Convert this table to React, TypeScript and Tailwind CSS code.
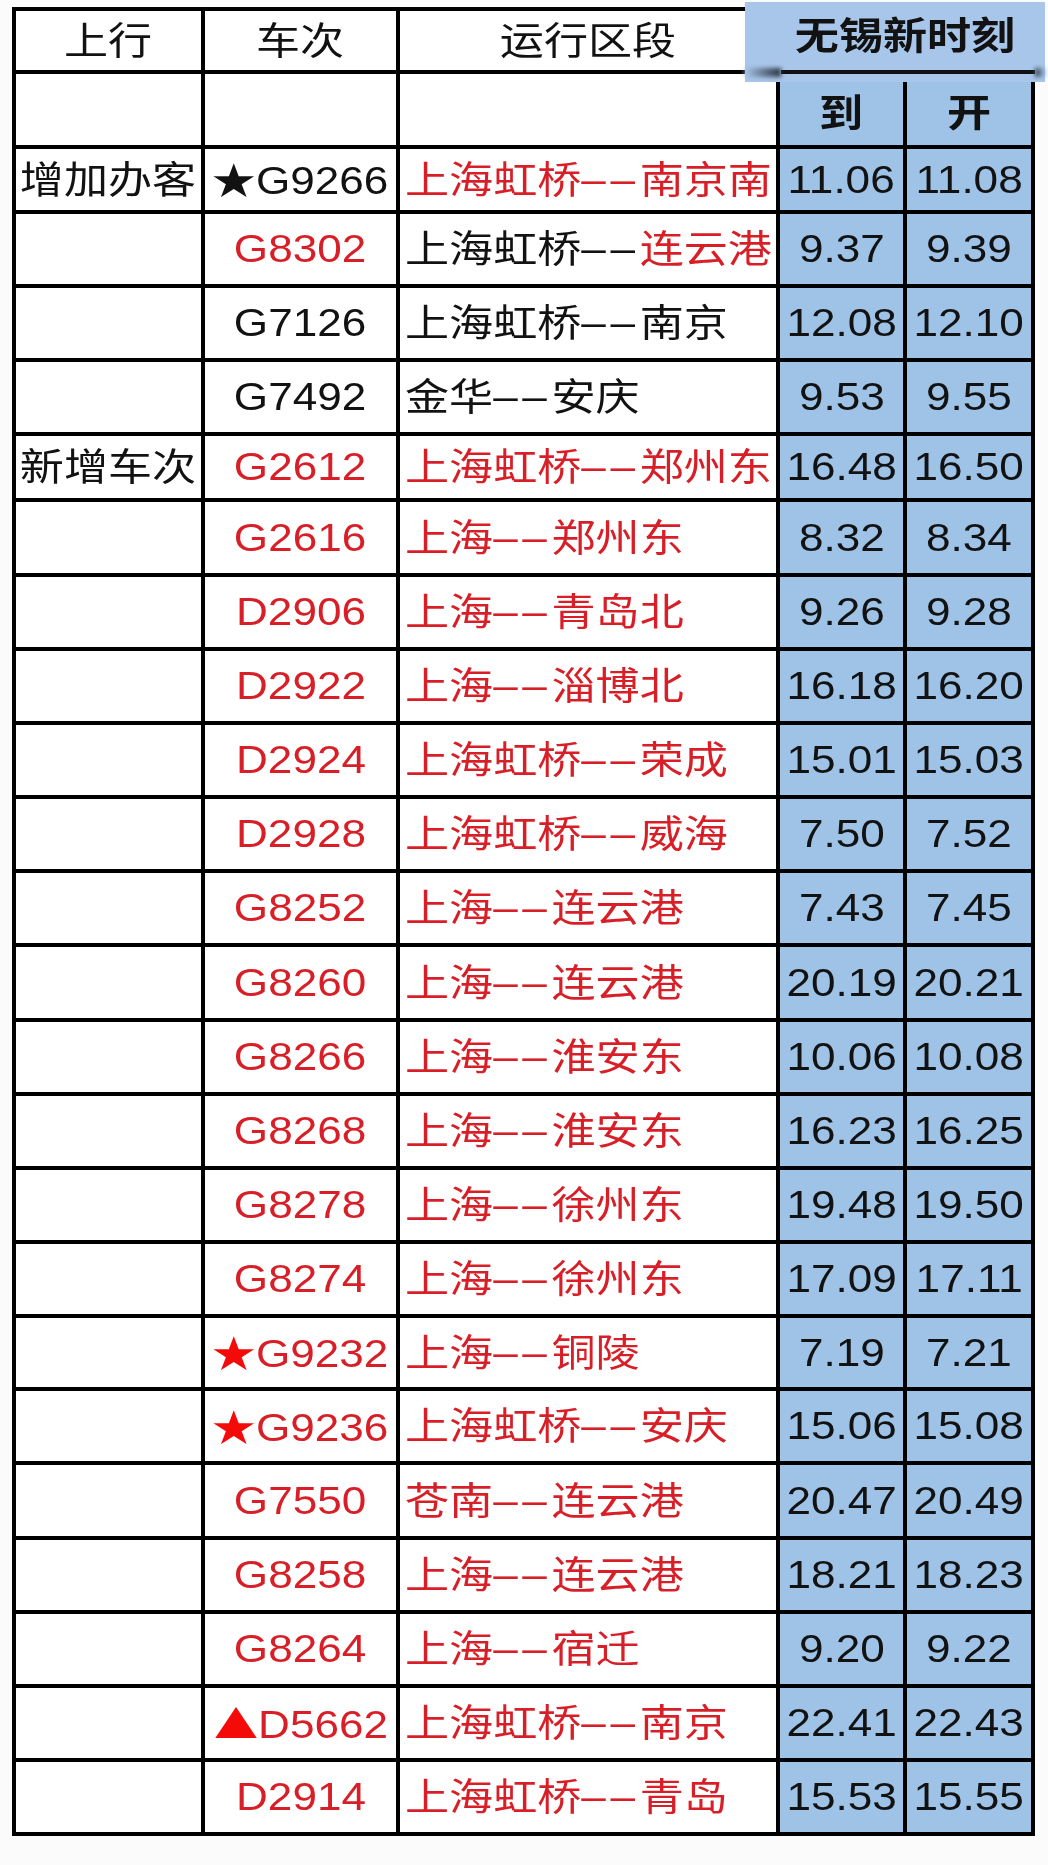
import React from "react";

type Row = {
  tag?: string;
  mark?: string;
  no: string;
  red: boolean;
  route: string;
  tone: "red" | "black" | "split";
  arr: string;
  dep: string;
};

const rows: Row[] = [
  { tag: "增加办客", mark: "★", no: "G9266", red: false, route: "上海虹桥--南京南", tone: "red", arr: "11.06", dep: "11.08" },
  { no: "G8302", red: true, route: "上海虹桥--连云港", tone: "split", arr: "9.37", dep: "9.39" },
  { no: "G7126", red: false, route: "上海虹桥--南京", tone: "black", arr: "12.08", dep: "12.10" },
  { no: "G7492", red: false, route: "金华--安庆", tone: "black", arr: "9.53", dep: "9.55" },
  { tag: "新增车次", no: "G2612", red: true, route: "上海虹桥--郑州东", tone: "red", arr: "16.48", dep: "16.50" },
  { no: "G2616", red: true, route: "上海--郑州东", tone: "red", arr: "8.32", dep: "8.34" },
  { no: "D2906", red: true, route: "上海--青岛北", tone: "red", arr: "9.26", dep: "9.28" },
  { no: "D2922", red: true, route: "上海--淄博北", tone: "red", arr: "16.18", dep: "16.20" },
  { no: "D2924", red: true, route: "上海虹桥--荣成", tone: "red", arr: "15.01", dep: "15.03" },
  { no: "D2928", red: true, route: "上海虹桥--威海", tone: "red", arr: "7.50", dep: "7.52" },
  { no: "G8252", red: true, route: "上海--连云港", tone: "red", arr: "7.43", dep: "7.45" },
  { no: "G8260", red: true, route: "上海--连云港", tone: "red", arr: "20.19", dep: "20.21" },
  { no: "G8266", red: true, route: "上海--淮安东", tone: "red", arr: "10.06", dep: "10.08" },
  { no: "G8268", red: true, route: "上海--淮安东", tone: "red", arr: "16.23", dep: "16.25" },
  { no: "G8278", red: true, route: "上海--徐州东", tone: "red", arr: "19.48", dep: "19.50" },
  { no: "G8274", red: true, route: "上海--徐州东", tone: "red", arr: "17.09", dep: "17.11" },
  { mark: "★", no: "G9232", red: true, route: "上海--铜陵", tone: "red", arr: "7.19", dep: "7.21" },
  { mark: "★", no: "G9236", red: true, route: "上海虹桥--安庆", tone: "red", arr: "15.06", dep: "15.08" },
  { no: "G7550", red: true, route: "苍南--连云港", tone: "red", arr: "20.47", dep: "20.49" },
  { no: "G8258", red: true, route: "上海--连云港", tone: "red", arr: "18.21", dep: "18.23" },
  { no: "G8264", red: true, route: "上海--宿迁", tone: "red", arr: "9.20", dep: "9.22" },
  { mark: "▲", no: "D5662", red: true, route: "上海虹桥--南京", tone: "red", arr: "22.41", dep: "22.43" },
  { no: "D2914", red: true, route: "上海虹桥--青岛", tone: "red", arr: "15.53", dep: "15.55" },
];

const RED = "text-[#d81f27]";
const INK = "text-[#121212]";

function Route({ route, tone }: { route: string; tone: Row["tone"] }) {
  const [from, to] = route.split("--");
  const head = tone === "red" ? RED : INK;
  const tail = tone === "black" ? INK : RED;
  return (
    <span className="origin-left scale-x-[1.16] whitespace-nowrap">
      <span className={head}>
        {from}
        <span className="tracking-[4px]">––</span>
      </span>
      <span className={tail}>{to}</span>
    </span>
  );
}

export default function App() {
  return (
    <div className="relative h-[1865px] w-[1048px] bg-[#fbfbfb] pl-[12px] pt-[7px] font-['Liberation_Sans','Noto_Sans_CJK_SC',sans-serif] text-[38px] leading-none text-[#121212]">
      <div className="grid w-fit grid-cols-[185px_191px_376px_123px_124px] grid-rows-[59px_71px_61px_70px_70px_70px_62px_71px_70px_70px_70px_70px_70px_71px_70px_70px_70px_70px_69px_70px_71px_70px_70px_70px_70px] gap-[4px] bg-black p-[4px]">
        {/* header */}
        <div className="flex items-center justify-center bg-white">
          <span className="scale-x-[1.16]">上行</span>
        </div>
        <div className="flex items-center justify-center bg-white">
          <span className="scale-x-[1.16]">车次</span>
        </div>
        <div className="flex items-center justify-center bg-white">
          <span className="scale-x-[1.16]">运行区段</span>
        </div>
        <div className="col-span-2 bg-[#a6c5e9]" />

        <div className="bg-white" />
        <div className="bg-white" />
        <div className="bg-white" />
        <div className="flex items-center justify-center bg-[#9ec3e7] pt-[6px] font-bold">
          <span className="scale-x-[1.16]">到</span>
        </div>
        <div className="flex items-center justify-center bg-[#9ec3e7] pt-[6px] font-bold">
          <span className="scale-x-[1.16]">开</span>
        </div>

        {rows.map((r) => (
          <React.Fragment key={r.no}>
            <div className="flex items-center justify-center bg-white">
              {r.tag && <span className="scale-x-[1.16] whitespace-nowrap">{r.tag}</span>}
            </div>
            <div className="flex items-center justify-center bg-white">
              <span className={`scale-x-[1.16] whitespace-nowrap ${r.red ? RED : INK}`}>
                {r.mark && (
                  <span className={`font-['Noto_Sans_CJK_SC',sans-serif] ${r.red ? "text-[#f50a0a]" : INK}`}>
                    {r.mark}
                  </span>
                )}
                {r.no}
              </span>
            </div>
            <div className="flex items-center bg-white pl-[5px]">
              <Route route={r.route} tone={r.tone} />
            </div>
            <div className="flex items-center justify-center bg-[#9ec3e7]">
              <span className="scale-x-[1.16]">{r.arr}</span>
            </div>
            <div className="flex items-center justify-center bg-[#9ec3e7]">
              <span className="scale-x-[1.16]">{r.dep}</span>
            </div>
          </React.Fragment>
        ))}
      </div>

      {/* pasted title strip over the time columns */}
      <div className="absolute left-[745px] top-[2px] h-[80px] w-[300px] bg-[#a8c6ea]">
        <div className="flex h-[68px] items-center justify-center pl-[20px] font-bold">
          <span className="scale-x-[1.16]">无锡新时刻</span>
        </div>
        <div className="flex h-[4px] items-center">
          <div className="h-[9px] w-[36px] bg-linear-to-r from-[#a8c6ea] to-[#2c3642] blur-[2px]" />
          <div className="h-[4px] flex-1 bg-[#111]" />
          <div className="h-[9px] w-[10px] bg-linear-to-r from-[#2c3642] to-[#a8c6ea] blur-[2px]" />
        </div>
      </div>
    </div>
  );
}
